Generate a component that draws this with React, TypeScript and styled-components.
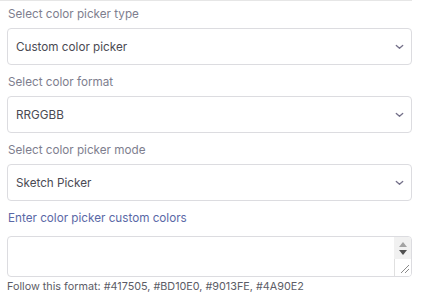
import React from "react";
import styled, { createGlobalStyle } from "styled-components";

const Global = createGlobalStyle`
  html, body { margin: 0; padding: 0; background: #ffffff; }
  body { font-family: Inter, "Noto Sans", sans-serif; }
`;

const Panel = styled.div`
  width: 412px;
  border-top: 1px solid #e6e6e6;
  padding: 4px 0 0 7px;
  box-sizing: border-box;
  display: flex;
  flex-direction: column;
`;

const Field = styled.div<{ $first?: boolean }>`
  display: flex;
  flex-direction: column;
  margin-top: ${(p) => (p.$first ? "0" : "8px")};
`;

const Label = styled.label<{ $accent?: boolean }>`
  font-size: 11.7px;
  line-height: 18px;
  color: ${(p) => (p.$accent ? "#5a68a6" : "#7e7e8e")};
  padding-left: 1px;
  margin-bottom: ${(p) => (p.$accent ? "9px" : "5px")};
`;

const SelectWrap = styled.div`
  position: relative;
  height: 37px;
`;

const Select = styled.select`
  appearance: none;
  -webkit-appearance: none;
  width: 100%;
  height: 37px;
  box-sizing: border-box;
  border: 1px solid #dcdce0;
  border-radius: 4px;
  background: #fff;
  padding: 0 30px 0 8px;
  font-family: Inter, "Noto Sans", sans-serif;
  font-size: 11.7px;
  color: #4a4a53;
  outline: none;
`;

const Chevron = styled.svg`
  position: absolute;
  right: 8px;
  top: 16px;
  width: 9px;
  height: 6px;
  pointer-events: none;
`;

const AreaWrap = styled.div`
  position: relative;
  height: 41px;
`;

const TextArea = styled.textarea`
  width: 100%;
  height: 41px;
  box-sizing: border-box;
  border: 1px solid #dcdce0;
  border-radius: 4px;
  overflow: hidden;
  resize: none;
  padding: 4px 22px 4px 8px;
  font-family: Inter, "Noto Sans", sans-serif;
  font-size: 12px;
  outline: none;
  display: block;
`;

const Gutter = styled.div`
  position: absolute;
  top: 1px;
  right: 1px;
  bottom: 1px;
  width: 17px;
  display: flex;
  flex-direction: column;
  border-top-right-radius: 3px;
  border-bottom-right-radius: 3px;
  overflow: hidden;
  pointer-events: none;
`;

const Track = styled.div`
  flex: 1;
  background: #f1f1f1;
  display: flex;
  flex-direction: column;
  align-items: center;
  justify-content: center;
  gap: 3px;
`;

const Corner = styled.div`
  height: 17px;
  background: #ffffff;
  border-left: 1px solid #e0e0e0;
  box-sizing: border-box;
`;

const Help = styled.div`
  font-size: 10.8px;
  line-height: 18px;
  color: #5c5c66;
  margin-top: 1px;
`;

type SelectFieldProps = { label: string; value: string; first?: boolean };

const SelectField = ({ label, value, first }: SelectFieldProps) => (
  <Field $first={first}>
    <Label>{label}</Label>
    <SelectWrap>
      <Select defaultValue={value}>
        <option value={value}>{value}</option>
      </Select>
      <Chevron viewBox="0 0 9 6">
        <path d="M1.3 1.4 L4.5 4.3 L7.7 1.4" fill="none" stroke="#75718a" strokeWidth="1.3" strokeLinecap="round" strokeLinejoin="round" />
      </Chevron>
    </SelectWrap>
  </Field>
);

export default function App() {
  return (
    <>
      <Global />
      <Panel>
        <SelectField first label="Select color picker type" value="Custom color picker" />
        <SelectField label="Select color format" value="RRGGBB" />
        <SelectField label="Select color picker mode" value="Sketch Picker" />
        <Field>
          <Label $accent>Enter color picker custom colors</Label>
          <AreaWrap>
            <TextArea />
            <Gutter>
              <Track>
                <svg width="8" height="5" viewBox="0 0 8 5">
                  <path d="M0 5 L4 0 L8 5 Z" fill="#a3a3a3" />
                </svg>
                <svg width="8" height="5" viewBox="0 0 8 5">
                  <path d="M0 0 L8 0 L4 5 Z" fill="#505050" />
                </svg>
              </Track>
              <Corner>
                <svg width="16" height="16" viewBox="0 0 16 16">
                  <path d="M14 6 L6 14 M14 10 L10 14" stroke="#8a8a8a" strokeWidth="1" />
                </svg>
              </Corner>
            </Gutter>
          </AreaWrap>
          <Help>Follow this format: #417505, #BD10E0, #9013FE, #4A90E2</Help>
        </Field>
      </Panel>
    </>
  );
}
